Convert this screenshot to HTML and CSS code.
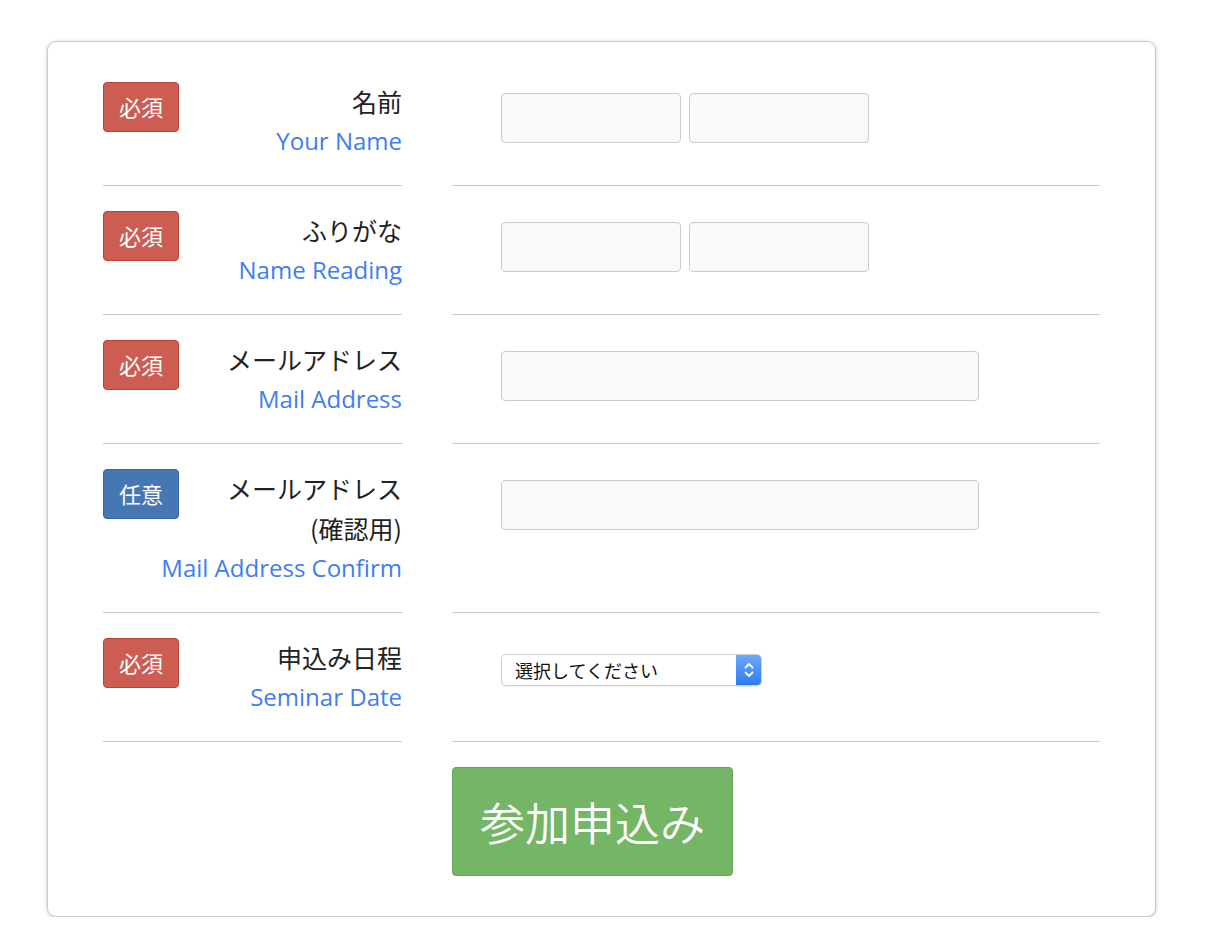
FILE: index.html
```html
<!DOCTYPE html>
<html lang="ja">
<head>
<meta charset="utf-8">
<title>Seminar Form</title>
<link rel="stylesheet" href="styles.css">
</head>
<body>
<form class="card">
  <div class="row">
    <div class="label-cell">
      <span class="badge req">必須</span>
      <div class="label"><span class="jp">名前</span><span class="en">Your Name</span></div>
    </div>
    <div class="field-cell">
      <div class="pair"><input class="input short" type="text"><input class="input short" type="text"></div>
    </div>
  </div>
  <div class="row">
    <div class="label-cell">
      <span class="badge req">必須</span>
      <div class="label"><span class="jp">ふりがな</span><span class="en">Name Reading</span></div>
    </div>
    <div class="field-cell">
      <div class="pair"><input class="input short" type="text"><input class="input short" type="text"></div>
    </div>
  </div>
  <div class="row">
    <div class="label-cell">
      <span class="badge req">必須</span>
      <div class="label"><span class="jp">メールアドレス</span><span class="en">Mail Address</span></div>
    </div>
    <div class="field-cell">
      <input class="input wide" type="text">
    </div>
  </div>
  <div class="row">
    <div class="label-cell">
      <span class="badge opt">任意</span>
      <div class="label"><span class="jp">メールアドレス</span><span class="jp">(確認用)</span><span class="en">Mail Address Confirm</span></div>
    </div>
    <div class="field-cell">
      <input class="input wide" type="text">
    </div>
  </div>
  <div class="row">
    <div class="label-cell">
      <span class="badge req">必須</span>
      <div class="label"><span class="jp">申込み日程</span><span class="en">Seminar Date</span></div>
    </div>
    <div class="field-cell select-cell">
      <div class="select">
        <span class="select-text">選択してください</span>
        <span class="stepper">
          <svg width="12" height="20" viewBox="0 0 12 20"><path d="M2.5 7.5 L6 4 L9.5 7.5 M2.5 12.5 L6 16 L9.5 12.5" fill="none" stroke="#fff" stroke-width="1.8" stroke-linecap="round" stroke-linejoin="round"/></svg>
        </span>
      </div>
    </div>
  </div>
  <div class="submit-row">
    <button type="button" class="submit">参加申込み</button>
  </div>
</form>
</body>
</html>
```

FILE: styles.css
```css
* { box-sizing: border-box; }
html, body { margin: 0; padding: 0; background: #fff; }
body {
  font-family: "Noto Sans CJK JP", "Open Sans", sans-serif;
  color: #222;
}
.card {
  margin: 41px 0 0 47px;
  width: 1109px;
  height: 876px;
  border: 1px solid #c9c9c9;
  border-radius: 9px;
  box-shadow: 0 1px 4px rgba(0,0,0,0.2);
  padding: 15px 55px 40px;
  background: #fff;
}
.row {
  display: grid;
  grid-template-columns: 299px 648px;
  column-gap: 50px;
}
.label-cell {
  display: flow-root;
  padding: 25px 0 24px;
  border-bottom: 1px solid #c8c8c8;
}
.field-cell {
  padding: 36px 0 0 49px;
  border-bottom: 1px solid #c8c8c8;
}
.select-cell { padding-top: 41px; }
.badge {
  float: left;
  display: flex;
  align-items: center;
  justify-content: center;
  width: 76px;
  height: 50px;
  border-radius: 4px;
  color: #fff;
  font-size: 22px;
  line-height: 1;
  padding-bottom: 3px;
}
.badge.req { background: #cd5c52; border: 1px solid #bf4036; }
.badge.opt { background: #4577b2; border: 1px solid #3766a0; }
.label {
  text-align: right;
  white-space: nowrap;
  margin-top: -1px;
}
.jp {
  display: block;
  font-size: 25px;
  line-height: 40px;
  color: #222;
}
.en {
  display: block;
  font-family: "Open Sans", "Noto Sans CJK JP", sans-serif;
  font-size: 24px;
  line-height: 40px;
  color: #3f7df2;
}
.pair { display: flex; gap: 8px; }
.input {
  display: block;
  height: 50px;
  background: #f9f9f9;
  border: 1px solid #cbcbcb;
  border-radius: 4px;
  margin: 0;
  padding: 0;
}
.input.short { width: 180px; }
.input.wide { width: 478px; }
.select {
  display: flex;
  align-items: stretch;
  width: 261px;
  height: 32px;
  border: 1px solid #cfcfcf;
  border-radius: 5px;
  background: #fff;
  box-shadow: 0 1px 1px rgba(0,0,0,0.08);
  overflow: hidden;
}
.select-text {
  flex: 1;
  font-size: 18px;
  line-height: 30px;
  padding-left: 13px;
  color: #111;
}
.stepper {
  width: 25px;
  display: flex;
  align-items: center;
  justify-content: center;
  background: linear-gradient(#6aa9fb, #2e7bf1);
}
.submit-row {
  display: grid;
  grid-template-columns: 299px 648px;
  column-gap: 50px;
  padding-top: 25px;
}
.submit {
  grid-column: 2;
  width: 281px;
  height: 109px;
  background: #74b666;
  border: 1px solid #65a659;
  border-radius: 4px;
  color: #fff;
  font-family: "Noto Sans CJK JP", sans-serif;
  font-size: 45px;
  font-weight: 350;
  padding: 0;
}
```
